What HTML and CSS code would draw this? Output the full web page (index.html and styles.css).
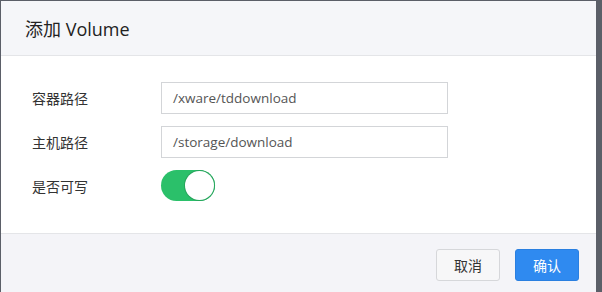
FILE: index.html
```html
<!DOCTYPE html>
<html>
<head>
<meta charset="utf-8">
<link rel="stylesheet" href="styles.css">
</head>
<body>
<div class="modal">
  <div class="modal-header">添加 Volume</div>
  <div class="modal-body">
    <div class="row">
      <label class="label">容器路径</label>
      <div class="input">/xware/tddownload</div>
    </div>
    <div class="row">
      <label class="label">主机路径</label>
      <div class="input">/storage/download</div>
    </div>
    <div class="row">
      <label class="label">是否可写</label>
      <div class="switch"><span class="knob"></span></div>
    </div>
  </div>
  <div class="modal-footer">
    <button class="btn btn-default">取消</button>
    <button class="btn btn-primary">确认</button>
  </div>
</div>
</body>
</html>
```
FILE: styles.css
```css
html, body {
  margin: 0;
  padding: 0;
  height: 100%;
}
body {
  background: #5b5f68;
  font-family: "Open Sans", "Noto Sans CJK SC", sans-serif;
  overflow: hidden;
}
.modal {
  margin: 1px 6px 0 1px;
  background: #fff;
  height: 300px;
  display: flex;
  flex-direction: column;
}
.modal-header {
  height: 55px;
  box-sizing: border-box;
  padding: 0 0 0 24px;
  display: flex;
  align-items: center;
  background: #f5f6f9;
  border-bottom: 1px solid #e4e5e8;
  font-size: 18px;
  color: #222;
}
.modal-body {
  padding: 26px 0 0 31px;
  height: 177px;
  box-sizing: border-box;
  display: flex;
  flex-direction: column;
  gap: 12px;
}
.row {
  display: flex;
  align-items: center;
}
.label {
  width: 129px;
  font-size: 14px;
  color: #333;
}
.input {
  width: 287px;
  height: 32px;
  box-sizing: border-box;
  border: 1px solid #d3d5d8;
  padding: 0 11px;
  display: flex;
  align-items: center;
  font-size: 13.5px;
  color: #555;
}
.switch {
  width: 54px;
  height: 31px;
  border-radius: 16px;
  background: #2bc06a;
  position: relative;
  box-sizing: border-box;
}
.knob {
  position: absolute;
  right: 1px;
  top: 1px;
  width: 29px;
  height: 29px;
  border-radius: 50%;
  background: #fff;
  box-shadow: 0 0 0 1px #27a45c;
}
.modal-footer {
  flex: 1;
  background: #f4f4f8;
  border-top: 1px solid #e4e5e8;
  display: flex;
  justify-content: flex-end;
  align-items: flex-start;
  padding: 15px 17px 0 0;
  gap: 15px;
}
.btn {
  width: 64px;
  height: 32px;
  border-radius: 3px;
  font-family: "Open Sans", "Noto Sans CJK SC", sans-serif;
  font-size: 14px;
  cursor: pointer;
}
.btn-default {
  background: #f7f7f8;
  border: 1px solid #d6d7da;
  color: #333;
}
.btn-primary {
  background: #2f8af0;
  border: 1px solid #2a7fe0;
  color: #fff;
}
```
